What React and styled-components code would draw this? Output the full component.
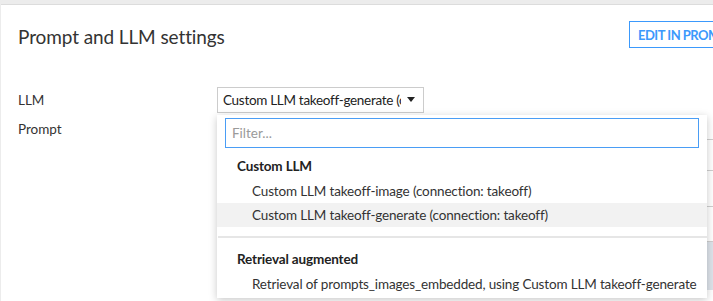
import React, { useState } from 'react'
import styled, { createGlobalStyle } from 'styled-components'

const Global = createGlobalStyle`
  html, body {
    margin: 0;
    padding: 0;
    background: #ececec;
    font-family: "Source Sans Pro", Lato, "Liberation Sans", sans-serif;
    color: #333;
  }
`

const Page = styled.div`
  width: 713px;
  height: 301px;
  overflow: hidden;
  padding: 4px 0 0 1px;
  box-sizing: border-box;
`

const Panel = styled.section`
  position: relative;
  background: #fff;
  border-top: 1px solid #dcdcdc;
  height: 100%;
  padding: 16px 0 0 17px;
  box-sizing: border-box;
`

const Header = styled.div`
  display: flex;
  justify-content: space-between;
  align-items: flex-start;
  height: 62px;
`

const Title = styled.h2`
  margin: 0;
  padding-top: 4px;
  font-size: 19px;
  font-weight: 400;
  color: #333;
  letter-spacing: -0.1px;
`

const EditButton = styled.button`
  flex-shrink: 0;
  margin-right: -80px;
  width: 164px;
  height: 27px;
  border: 1.5px solid #3b99fc;
  background: #fff;
  color: #3b99fc;
  font-family: inherit;
  font-size: 13px;
  font-weight: 700;
  letter-spacing: -0.5px;
  text-align: left;
  padding: 0 8px;
  white-space: nowrap;
`

const Row = styled.div`
  display: grid;
  grid-template-columns: 199px 1fr;
  align-items: center;
  height: ${(p) => p.h}px;
`

const Label = styled.div`
  font-size: 13.5px;
  color: #333;
  align-self: ${(p) => p.align || 'center'};
  padding-top: ${(p) => p.pt || 0}px;
`

const SelectWrap = styled.div`
  position: relative;
`

const Select = styled.div`
  display: flex;
  align-items: center;
  width: 207px;
  height: 26px;
  box-sizing: border-box;
  border: 1px solid #ccc;
  padding: 0 0 0 5px;
  font-size: 13.5px;
  letter-spacing: -0.3px;
  color: #222;
  background: #fff;
`

const SelectText = styled.span`
  flex: 1;
  overflow: hidden;
  white-space: nowrap;
`

const Caret = styled.span`
  width: 0;
  height: 0;
  border-left: 4px solid transparent;
  border-right: 4px solid transparent;
  border-top: 5px solid #222;
  margin: 0 8px 0 6px;
`

const Behind = styled.div`
  display: grid;
  grid-template-rows: 24px 31px 36px 35px 48px;
  margin-left: -217px;
  width: 500px;
  height: 190px;
  position: relative;
  left: 490px;
`

const BehindCell = styled.div`
  border-bottom: 1px solid ${(p) => (p.last ? 'transparent' : '#cfcfcf')};
  background: ${(p) => (p.tint ? '#dde3ea' : 'transparent')};
  font-size: 14px;
  font-weight: ${(p) => (p.bold ? 700 : 400)};
  color: #4b5a6a;
  padding-left: 2px;
  display: flex;
  align-items: center;
`

const Dropdown = styled.div`
  position: absolute;
  left: 0;
  top: 28px;
  width: 490px;
  background: #fff;
  box-shadow: 0 2px 8px rgba(0, 0, 0, 0.22);
  padding: 3px 0 2px;
  z-index: 5;
`

const Filter = styled.input`
  display: block;
  margin: 0 8px;
  width: calc(100% - 16px);
  height: 30px;
  box-sizing: border-box;
  border: 1px solid #4a9df5;
  outline: none;
  padding: 0 6px;
  font-family: inherit;
  font-size: 13.5px;
  color: #333;
  &::placeholder {
    color: #9a9a9a;
  }
`

const Group = styled.div`
  font-size: 13.5px;
  font-weight: 700;
  letter-spacing: -0.15px;
  color: #222;
  padding: 0 20px;
  height: 24px;
  line-height: 24px;
  margin: ${(p) => p.mt || 0}px 0 1px;
`

const Item = styled.div`
  font-size: 13.5px;
  letter-spacing: -0.15px;
  color: #333;
  padding: 0 35px;
  height: 24px;
  line-height: 24px;
  white-space: nowrap;
  background: ${(p) => (p.active ? '#f2f2f2' : '#fff')};
`

const Divider = styled.div`
  height: 2px;
  background: #e6e6e6;
  margin: 9px 0 0 1px;
`

const App = () => {
  const [filter, setFilter] = useState('')
  const custom = [
    'Custom LLM takeoff-image (connection: takeoff)',
    'Custom LLM takeoff-generate (connection: takeoff)',
  ]

  return (
    <Page>
      <Global />
      <Panel>
        <Header>
          <Title>Prompt and LLM settings</Title>
          <EditButton>EDIT IN PROMPT STUDIO</EditButton>
        </Header>
        <Row h={33}>
          <Label>LLM</Label>
          <SelectWrap>
            <Select>
              <SelectText>Custom LLM takeoff-generate (connection: takeoff)</SelectText>
              <Caret />
            </Select>
            <Dropdown>
              <Filter
                placeholder='Filter...'
                value={filter}
                onChange={(e) => setFilter(e.target.value)}
              />
              <Group mt={6}>Custom LLM</Group>
              <Item>{custom[0]}</Item>
              <Item active>{custom[1]}</Item>
              <Divider />
              <Group mt={9}>Retrieval augmented</Group>
              <Item>Retrieval of prompts_images_embedded, using Custom LLM takeoff-generate</Item>
            </Dropdown>
          </SelectWrap>
        </Row>
        <Row h={190}>
          <Label align='start' pt={5}>Prompt</Label>
          <Behind>
            <BehindCell bold>A</BehindCell>
            <BehindCell />
            <BehindCell />
            <BehindCell />
            <BehindCell tint last>or</BehindCell>
          </Behind>
        </Row>
      </Panel>
    </Page>
  )
}

export default App
